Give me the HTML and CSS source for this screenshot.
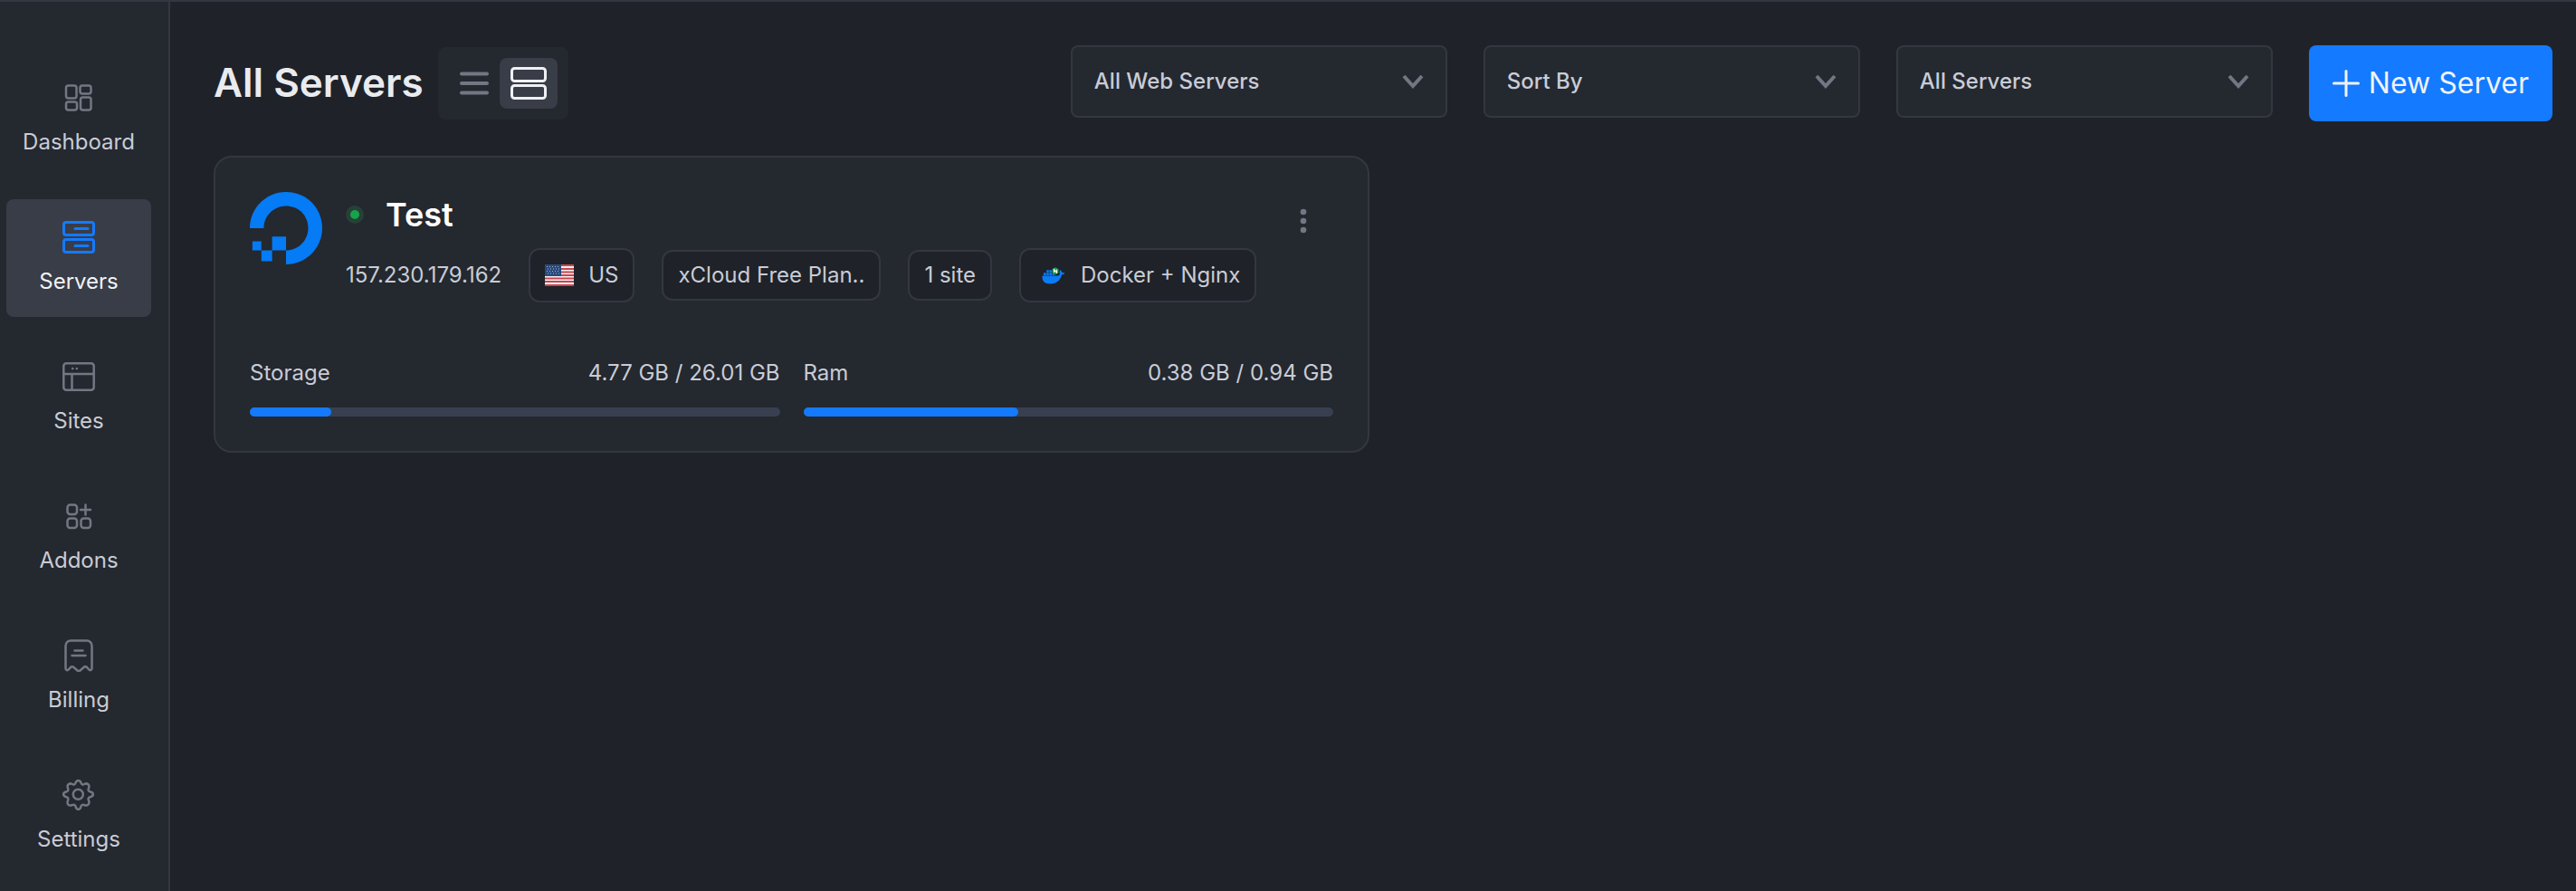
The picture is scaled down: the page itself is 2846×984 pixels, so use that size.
FILE: index.html
```html
<!DOCTYPE html>
<html lang="en">
<head>
  <meta charset="UTF-8" />
  <meta name="viewport" content="width=device-width, initial-scale=1.0"/>
  <title>All Servers</title>
  <link rel="stylesheet" href="styles.css">
</head>
<body>

<nav class="sidebar">
  <a href="#" class="nav-item">
    <svg class="nav-icon" viewBox="0 0 36 36">
      <rect x="4" y="4.5" width="11.5" height="14" rx="2.5"/>
      <rect x="19.5" y="4.5" width="12" height="9" rx="2.5"/>
      <rect x="4" y="22.5" width="12" height="9" rx="2.5"/>
      <rect x="20" y="17.5" width="11.5" height="14" rx="2.5"/>
    </svg>
    <span>Dashboard</span>
  </a>
  <a href="#" class="nav-item active">
    <svg class="nav-icon" viewBox="0 0 36 36">
      <rect x="1.5" y="1.5" width="33" height="14" rx="2.5"/>
      <rect x="1.5" y="20.5" width="33" height="14" rx="2.5"/>
      <path d="M14 8.500h14M14 27.500h14"/>
    </svg>
    <span>Servers</span>
  </a>
  <a href="#" class="nav-item">
    <svg class="nav-icon" viewBox="0 0 36 36">
      <rect x="1.3" y="3.3" width="33.400" height="29.4" rx="3"/>
      <path d="M1.500 15h33M10.500 15v17.500"/>
      <path d="M11.200 9h.1M15.800 9h.1"/>
    </svg>
    <span>Sites</span>
  </a>
  <a href="#" class="nav-item">
    <svg class="nav-icon" viewBox="0 0 36 36">
      <rect x="5.5" y="5.5" width="10.5" height="10.5" rx="3"/>
      <rect x="5.5" y="20.5" width="10.5" height="10.5" rx="3"/>
      <rect x="20.5" y="20.5" width="10.5" height="10.5" rx="3"/>
      <path d="M25.500 5.500v11M20 11h11"/>
    </svg>
    <span>Addons</span>
  </a>
  <a href="#" class="nav-item">
    <svg class="nav-icon" viewBox="0 0 36 36">
      <path d="M3.500 7A5.500 5.500 0 0 1 9 1.500h18A5.500 5.500 0 0 1 32.500 7v25c0 2.200-2 2.800-3.500 1.200l-2-2.200c-1-1-2.500-1-3.500 0l-4 3.500c-1 .9-2 .9-3 0l-4-3.500c-1-1-2.500-1-3.500 0l-2 2.200C5.500 34.800 3.500 34.200 3.500 32z"/>
      <path d="M13.500 12.500h9M10.500 18h15"/>
    </svg>
    <span>Billing</span>
  </a>
  <a href="#" class="nav-item">
    <svg class="nav-icon" viewBox="0 0 36 36">
      <path d="M14.500 4.500C15.500 1 19.500 1 20.500 4.500c.5 2 2 2.500 3.500 1.500 3.500-1.800 6.500 1 5 4.500-1 2-.2 3.300 1.500 3.800 4.500 1 4.500 5 0 6-1.700.5-2.500 1.800-1.500 3.700 1.500 4-1.500 6.500-5 5-1.500-.8-3 0-3.500 1.500-1 4.500-5 4.500-6 0-.5-1.500-2-2.300-3.500-1.500-4 1.500-6.500-1-5-5 .8-1.900 0-3.200-1.500-3.700-4.500-1-4.500-5 0-6 1.500-.5 2.300-1.800 1.500-3.800C4.500 7 7.500 4.200 11 6c1.500 1 3 .5 3.500-1.500z"/>
      <circle cx="17.3" cy="17.3" r="5.500"/>
    </svg>
    <span>Settings</span>
  </a>
</nav>

<main class="content">
  <header class="page-header">
    <h1>All Servers</h1>
    <div class="view-toggle">
      <button type="button" aria-label="List view">
        <svg width="34" height="28" viewBox="0 0 34 28"><path d="M3 3.500h28M3 14h28M3 24.500h28"/></svg>
      </button>
      <button type="button" class="active" aria-label="Card view">
        <svg width="42" height="38" viewBox="0 0 42 38">
          <rect x="2.5" y="2.5" width="37" height="14" rx="3"/>
          <rect x="2.5" y="21.5" width="37" height="14" rx="3"/>
        </svg>
      </button>
    </div>
    <div class="filters">
      <div class="select-box">
        <select aria-label="Web server">
          <option>All Web Servers</option>
          <option>Nginx</option>
        </select>
        <svg class="chevron" width="24" height="16" viewBox="0 0 24 16"><path d="M2 2l10 11L22 2"/></svg>
      </div>
      <div class="select-box">
        <select aria-label="Sort by">
          <option>Sort By</option>
          <option>Name</option>
        </select>
        <svg class="chevron" width="24" height="16" viewBox="0 0 24 16"><path d="M2 2l10 11L22 2"/></svg>
      </div>
      <div class="select-box">
        <select aria-label="Servers">
          <option>All Servers</option>
          <option>Connected</option>
        </select>
        <svg class="chevron" width="24" height="16" viewBox="0 0 24 16"><path d="M2 2l10 11L22 2"/></svg>
      </div>
      <button type="button" class="new-server">
        <svg width="30" height="30" viewBox="0 0 30 30"><path d="M15 1.500v27M1.500 15h27"/></svg>
        New Server
      </button>
    </div>
  </header>

  <section class="server-grid">
    <article class="card">
      <div class="card-top">
        <svg class="provider" viewBox="0 0 24 24">
          <path d="M12.04 0C5.408-.02.005 5.37.005 11.992h4.638c0-4.923 4.882-8.731 10.064-6.855a6.95 6.95 0 0 1 4.147 4.148c1.889 5.177-1.924 10.055-6.84 10.064v-4.61H7.391v4.623h4.61V24c7.86 0 13.967-7.588 11.397-15.83-1.115-3.59-3.985-6.446-7.575-7.575A12.8 12.8 0 0 0 12.039 0zM7.39 19.362H3.828v3.564H7.39zm-3.563 0v-2.978H.85v2.978z"/>
        </svg>
        <div class="details">
          <div class="name-row">
            <span class="status"></span>
            <h2>Test</h2>
          </div>
          <div class="tags">
            <span>157.230.179.162</span>
            <span class="tag with-icon">
              <svg width="32" height="24" viewBox="0 0 32 24">
                <rect width="32" height="24" fill="#f4f1f2"/>
                <path d="M0 1h32M0 5h32M0 8.500h32M0 12h32M0 15.500h32M0 19h32M0 23h32" stroke="#c8454f" stroke-width="2"/>
                <rect width="18" height="13" fill="#294a7e"/>
                <path d="M2 2.500h15M3 5h14M2 7.500h15M3 10h14" stroke="#a9b2c0" stroke-dasharray="1 2"/>
              </svg>
              US
            </span>
            <span class="tag">xCloud Free Plan..</span>
            <span class="tag">1 site</span>
            <span class="tag with-icon">
              <svg width="34" height="24" viewBox="0 0 34 24">
                <path fill="#0a7cf5" d="M7.500 12.500H24c1.500 0 2.500-.6 3-2-.8-1.500-.6-3 .3-4.500 1.200.8 1.800 1.800 2 3 1.200-.2 2.200 0 3 .6-.6 1.300-1.800 2-3.300 2C27.500 18 23 21.500 16.500 21.500 10 21.500 7 18.500 7.500 12.500z"/>
                <path fill="#0a7cf5" d="M9 9.300h2.600v2.600H9zM12.200 9.300h2.600v2.600h-2.600zM15.400 9.300H18v2.600h-2.600zM18.600 9.300h2.600v2.600h-2.600zM12.200 6.200h2.600v2.600h-2.600zM15.400 6.200H18v2.600h-2.600z"/>
                <path fill="#17a34a" d="M22 3.300l3.500 2v4L22 11.300l-3.500-2v-4z"/>
                <path fill="none" stroke="#fff" stroke-width="1.200" d="M20.500 9V5.800L23.500 9V5.800"/>
              </svg>
              Docker + Nginx
            </span>
          </div>
        </div>
        <button type="button" class="menu" aria-label="Server menu">
          <svg width="8" height="28" viewBox="0 0 8 28"><circle cx="4" cy="4" r="3.3"/><circle cx="4" cy="14" r="3.3"/><circle cx="4" cy="24" r="3.3"/></svg>
        </button>
      </div>
      <div class="usage">
        <div class="meter">
          <div class="meter-label"><span>Storage</span><span>4.77 GB / 26.01 GB</span></div>
          <div class="bar"><div class="fill" style="width: 15.4%"></div></div>
        </div>
        <div class="meter">
          <div class="meter-label"><span>Ram</span><span>0.38 GB / 0.94 GB</span></div>
          <div class="bar"><div class="fill" style="width: 40.5%"></div></div>
        </div>
      </div>
    </article>
  </section>
</main>

</body>
</html>
```
FILE: styles.css
```css
* {
  box-sizing: border-box;
}

body {
  margin: 0;
  min-height: 100vh;
  display: flex;
  background: #1f2229;
  border-top: 2px solid #343741;
  color: #c8ccd6;
  font-family: Inter, "Liberation Sans", sans-serif;
  font-size: 24px;
  line-height: 36px;
}

button,
select {
  font: inherit;
  color: inherit;
  border: none;
  cursor: pointer;
}

svg {
  display: block;
  flex-shrink: 0;
}

/* sidebar */

.sidebar {
  flex-shrink: 0;
  width: 188px;
  padding: 64px 19px 16px 7px;
  display: flex;
  flex-direction: column;
  gap: 24px;
  background: #24282f;
  border-right: 2px solid #343741;
}

.nav-item {
  height: 130px;
  padding-top: 24px;
  display: flex;
  flex-direction: column;
  align-items: center;
  gap: 13px;
  border-radius: 8px;
  color: inherit;
  text-decoration: none;
}

.nav-item.active {
  background: #383d48;
  color: #f0f2f5;
}

.nav-icon {
  width: 36px;
  height: 36px;
  fill: none;
  stroke: #737783;
  stroke-width: 2.5;
  stroke-linecap: round;
  stroke-linejoin: round;
}

.nav-item.active .nav-icon {
  stroke: #147aff;
  stroke-width: 3;
}

/* header */

.content {
  flex: 1;
  min-width: 0;
  padding: 48px 26px 48px 48px;
}

.page-header {
  display: flex;
  align-items: flex-start;
  margin-bottom: 38px;
}

h1 {
  margin: 0 16px 0 0;
  font-size: 44px;
  font-weight: 600;
  line-height: 82px;
  color: #e9ebef;
}

.view-toggle {
  display: flex;
  margin-top: 2px;
  padding: 12px;
  border-radius: 8px;
  background: #24282f;
}

.view-toggle button {
  width: 56px;
  height: 56px;
  padding: 0;
  display: flex;
  align-items: center;
  justify-content: center;
  background: none;
  border-radius: 8px;
}

.view-toggle button.active {
  width: 64px;
  background: #383d48;
}

.view-toggle svg {
  fill: none;
  stroke: #737783;
  stroke-width: 4;
  stroke-linecap: round;
}

.view-toggle .active svg {
  stroke: #eef0f3;
  stroke-width: 3;
}

.filters {
  margin-left: auto;
  display: flex;
  align-items: flex-start;
  gap: 40px;
}

.select-box {
  position: relative;
  width: 416px;
}

.select-box select {
  appearance: none;
  width: 100%;
  height: 80px;
  padding: 0 64px 0 24px;
  background: #24282f;
  border: 2px solid #343741;
  border-radius: 8px;
  font-weight: 500;
}

.chevron {
  position: absolute;
  right: 26px;
  top: 32px;
  pointer-events: none;
  fill: none;
  stroke: #737783;
  stroke-width: 4;
}

.new-server {
  height: 84px;
  padding: 0 26px;
  display: flex;
  align-items: center;
  gap: 10px;
  background: #147aff;
  border-radius: 8px;
  color: #f0f2f5;
  font-size: 32px;
}

.new-server svg {
  stroke: #f0f2f5;
  stroke-width: 3;
  stroke-linecap: round;
}

/* server card */

.server-grid {
  display: grid;
  grid-template-columns: 1fr 1fr;
  gap: 30px;
}

.card {
  padding: 38px;
  background: #24282f;
  border: 2px solid #343741;
  border-radius: 20px;
}

.card-top {
  display: flex;
  align-items: flex-start;
}

.provider {
  width: 80px;
  height: 80px;
  margin-right: 26px;
  fill: #057bf5;
}

.details {
  flex: 1;
}

.name-row {
  display: flex;
  align-items: center;
  gap: 24px;
  height: 50px;
}

h2 {
  margin: 0;
  font-size: 36px;
  font-weight: 600;
  color: #fff;
}

.status {
  width: 20px;
  height: 20px;
  background: #17a34a;
  border: 5px solid #264135;
  border-radius: 50%;
}

.tags {
  margin-top: 12px;
  display: flex;
  align-items: center;
  gap: 30px;
}

.tag {
  display: flex;
  align-items: center;
  gap: 16px;
  padding: 8px 16px;
  background: #1f2229;
  border: 2px solid #343741;
  border-radius: 12px;
}

.tag.with-icon {
  padding: 10px 16px;
}

.menu {
  margin: 18px 24px 0 0;
  padding: 0 5px;
  background: none;
}

.menu svg {
  fill: #737783;
}

.usage {
  margin-top: 60px;
  display: grid;
  grid-template-columns: 1fr 1fr;
  gap: 26px;
}

.meter-label {
  display: flex;
  justify-content: space-between;
}

.bar {
  height: 10px;
  margin-top: 20px;
  border-radius: 5px;
  background: #384050;
}

.fill {
  height: 10px;
  border-radius: 5px;
  background: #147aff;
}
```
